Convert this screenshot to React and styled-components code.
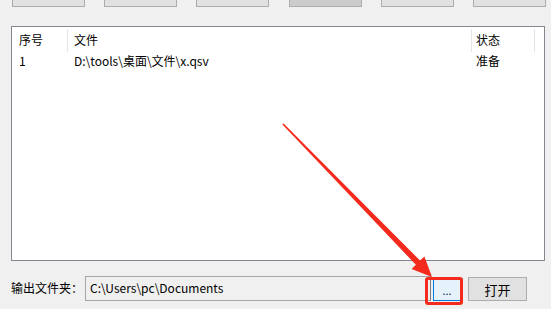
import React from "react";
import styled, { createGlobalStyle } from "styled-components";

const GlobalStyle = createGlobalStyle`
  html, body {
    margin: 0;
    padding: 0;
    background: #f0f0f0;
  }
  body {
    font-family: "Microsoft YaHei", "Noto Sans CJK SC", "Noto Sans", sans-serif;
    font-size: 12px;
    color: #000000;
  }
`;

const Window = styled.div`
  position: relative;
  width: 551px;
  height: 309px;
  overflow: hidden;
  background: #f0f0f0;
`;

const Toolbar = styled.div`
  display: flex;
  align-items: flex-end;
  justify-content: space-between;
  height: 7px;
  overflow: hidden;
  padding: 0 5px 0 12px;
`;

const ToolButton = styled.div`
  flex: 0 0 73px;
  height: 25px;
  box-sizing: border-box;
  border: 1px solid #adadad;
  background: ${(p) => (p.$pressed ? "#cccccc" : "#e1e1e1")};
`;

const ListBox = styled.div`
  margin: 19px 0 0 11px;
  width: 534px;
  height: 235px;
  box-sizing: border-box;
  border: 1px solid #828790;
  background: #ffffff;
`;

const Row = styled.div`
  display: grid;
  grid-template-columns: 56px 404px 63px;
  height: ${(p) => (p.$header ? "25px" : "18px")};
  align-items: center;
  line-height: 16px;
`;

const Cell = styled.div`
  position: relative;
  height: 100%;
  display: flex;
  align-items: center;
  padding-left: ${(p) => p.$pad || 6}px;
  white-space: nowrap;

  ${(p) =>
    p.$sep &&
    `
    &::after {
      content: "";
      position: absolute;
      right: 0;
      top: 2px;
      bottom: 0;
      width: 1px;
      background: #e5e5e5;
    }
  `}
`;

const BottomBar = styled.div`
  display: flex;
  align-items: flex-end;
  margin: 15px 0 0 11px;
  height: 25px;
`;

const Label = styled.div`
  width: 74px;
  height: 25px;
  line-height: 23px;
  white-space: nowrap;
`;

const PathField = styled.div`
  width: 346px;
  height: 25px;
  box-sizing: border-box;
  border: 1px solid #a5a5a5;
  border-right-color: #7a7a7a;
  background: #f0f0f0;
  padding-left: 4px;
  line-height: 21px;
  white-space: nowrap;
`;

const Button = styled.div`
  box-sizing: border-box;
  width: ${(p) => p.$w}px;
  height: ${(p) => p.$h}px;
  margin-left: ${(p) => p.$gap}px;
  border: 1px solid ${(p) => (p.$focused ? "#0078d7" : "#adadad")};
  background: ${(p) => (p.$focused ? "#e5f1fb" : "#e1e1e1")};
  display: flex;
  align-items: center;
  justify-content: center;
  font-size: ${(p) => (p.$focused ? "11px" : "13px")};
  color: ${(p) => (p.$focused ? "#0d2a55" : "#000000")};
`;

const Overlay = styled.svg`
  position: absolute;
  left: 0;
  top: 0;
  pointer-events: none;
`;

function Annotation() {
  return (
    <Overlay width="551" height="309" viewBox="0 0 551 309">
      <polygon
        points="282.4,124.6 415.9,264.8 411.6,269.0 432,277 424.4,256.4 420.1,260.6 283.6,123.4"
        fill="#f52a1e"
      />
      <rect
        x="426.5"
        y="278.5"
        width="35"
        height="25"
        rx="1.5"
        fill="none"
        stroke="#f52a1e"
        strokeWidth="3"
      />
    </Overlay>
  );
}

export default function App() {
  return (
    <Window>
      <GlobalStyle />
      <Toolbar>
        <ToolButton />
        <ToolButton />
        <ToolButton />
        <ToolButton $pressed />
        <ToolButton />
        <ToolButton />
      </Toolbar>
      <ListBox>
        <Row $header>
          <Cell $pad={7} $sep>序号</Cell>
          <Cell $sep>文件</Cell>
          <Cell $pad={4} $sep>状态</Cell>
        </Row>
        <Row>
          <Cell $pad={7}>1</Cell>
          <Cell>D:\tools\桌面\文件\x.qsv</Cell>
          <Cell $pad={4}>准备</Cell>
        </Row>
      </ListBox>
      <BottomBar>
        <Label>输出文件夹：</Label>
        <PathField>C:\Users\pc\Documents</PathField>
        <Button $w={28} $h={23} $gap={2} $focused>...</Button>
        <Button $w={59} $h={24} $gap={7}>打开</Button>
      </BottomBar>
      <Annotation />
    </Window>
  );
}
